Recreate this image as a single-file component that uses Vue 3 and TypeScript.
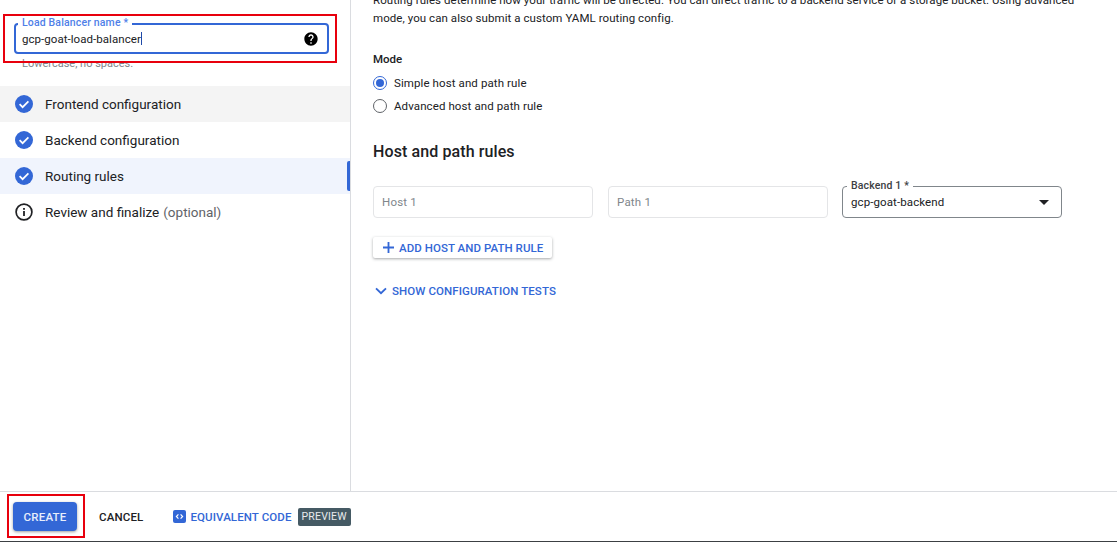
<script setup lang="ts">
const steps = [
  { label: 'Frontend configuration', done: true, cls: 'hovered' },
  { label: 'Backend configuration', done: true, cls: '' },
  { label: 'Routing rules', done: true, cls: 'active' },
  { label: 'Review and finalize', note: '(optional)', done: false, cls: '' },
]
</script>

<template>
  <div class="page">
    <div class="main">
      <aside class="side">
        <div class="name-field">
          <span class="float-label blue">Load Balancer name *</span>
          <span class="value">gcp-goat-load-balancer<i class="caret"></i></span>
          <svg class="help" viewBox="0 0 24 24" width="16" height="16">
            <path d="M12 2C6.48 2 2 6.48 2 12s4.48 10 10 10 10-4.48 10-10S17.52 2 12 2zm1 17h-2v-2h2v2zm2.07-7.75-.9.92C13.45 12.9 13 13.5 13 15h-2v-.5c0-1.1.45-2.1 1.17-2.83l1.24-1.26c.37-.36.59-.86.59-1.41 0-1.1-.9-2-2-2s-2 .9-2 2H8c0-2.21 1.79-4 4-4s4 1.79 4 4c0 .88-.36 1.68-.93 2.25z" />
          </svg>
          <div class="red-box name-box"></div>
        </div>
        <div class="hint">Lowercase, no spaces.</div>
        <ul class="steps">
          <li v-for="s in steps" :key="s.label" class="step" :class="s.cls">
            <svg v-if="s.done" viewBox="0 0 18 18" width="18" height="18" class="step-icon">
              <circle cx="9" cy="9" r="9" fill="#3367d6" />
              <path d="M4.6 9.2l3 3 5.8-5.8" fill="none" stroke="#fff" stroke-width="1.7" />
            </svg>
            <svg v-else viewBox="0 0 18 18" width="18" height="18" class="step-icon">
              <circle cx="9" cy="9" r="7.9" fill="none" stroke="#202124" stroke-width="1.7" />
              <rect x="8.1" y="8" width="1.8" height="5" fill="#202124" />
              <rect x="8.1" y="5" width="1.8" height="1.8" fill="#202124" />
            </svg>
            <span>{{ s.label }}</span>
            <span v-if="s.note" class="note">{{ s.note }}</span>
          </li>
        </ul>
      </aside>

      <section class="content">
        <p class="intro">
          Routing rules determine how your traffic will be directed. You can direct traffic to a backend service or a storage bucket. Using advanced<br />
          mode, you can also submit a custom YAML routing config.
        </p>
        <div class="mode-title">Mode</div>
        <div class="radio-row">
          <span class="radio on"><i></i></span>
          <span>Simple host and path rule</span>
        </div>
        <div class="radio-row second">
          <span class="radio"></span>
          <span>Advanced host and path rule</span>
        </div>
        <h2>Host and path rules</h2>
        <div class="rule-row">
          <div class="ghost-input">Host 1</div>
          <div class="ghost-input">Path 1</div>
          <div class="select">
            <span class="float-label dark">Backend 1 *</span>
            <span>gcp-goat-backend</span>
            <i class="arrow"></i>
          </div>
        </div>
        <button class="add-btn">
          <svg viewBox="0 0 12 12" width="11" height="11"><path d="M5 0h2v5h5v2H7v5H5V7H0V5h5z" fill="#3367d6" /></svg>
          ADD HOST AND PATH RULE
        </button>
        <div class="show-tests">
          <svg viewBox="0 0 14 9" width="12" height="8"><path d="M1.2 1.5L7 7l5.8-5.5" fill="none" stroke="#3367d6" stroke-width="2.2" /></svg>
          SHOW CONFIGURATION TESTS
        </div>
      </section>
    </div>

    <footer class="footer">
      <div class="create-wrap">
        <button class="create">CREATE</button>
        <div class="red-box create-box"></div>
      </div>
      <button class="cancel">CANCEL</button>
      <div class="code-link">
        <svg viewBox="0 0 13 13" width="13" height="13">
          <rect width="13" height="13" rx="2" fill="#3367d6" />
          <path d="M5.4 4.4L3.4 6.5l2 2.1M7.6 4.4l2 2.1-2 2.1" fill="none" stroke="#fff" stroke-width="1.2" />
        </svg>
        EQUIVALENT CODE
      </div>
      <span class="preview">PREVIEW</span>
    </footer>
  </div>
</template>

<style>
html, body {
  margin: 0;
  background: #fff;
  overflow: hidden;
}
</style>

<style scoped>
.page {
  width: 1117px;
  height: 542px;
  display: flex;
  flex-direction: column;
  font-family: Roboto, "Liberation Sans", sans-serif;
  color: #202124;
  font-size: 13px;
  box-sizing: border-box;
  border-bottom: 1px solid #3c4043;
  overflow: hidden;
}

.main {
  flex: 1;
  display: flex;
  min-height: 0;
}

.side {
  width: 351px;
  flex: none;
  box-sizing: border-box;
  border-right: 1px solid #dadce0;
  padding-top: 23px;
}

.name-field {
  position: relative;
  margin-left: 14px;
  width: 315px;
  height: 31px;
  box-sizing: border-box;
  border: 2px solid #3367d6;
  border-radius: 4px;
  display: flex;
  align-items: center;
  padding: 0 8px 0 6px;
  justify-content: space-between;
}

.value {
  display: flex;
  align-items: center;
  font-size: 11.5px;
  letter-spacing: 0.05px;
}

.caret {
  width: 1px;
  height: 13px;
  background: #1f4aa8;
}

.help {
  fill: #000;
}

.float-label {
  position: absolute;
  top: -9px;
  left: 2px;
  padding: 0 4px;
  background: #fff;
  font-size: 10.5px;
  font-weight: 500;
  line-height: 14px;
  letter-spacing: 0.15px;
}

.blue {
  color: #4f7fe8;
}

.dark {
  color: #3c4043;
  top: -8px;
  left: 4px;
}

.red-box {
  position: absolute;
  border: 2px solid #e8000d;
  box-sizing: border-box;
  pointer-events: none;
}

.name-box {
  left: -13px;
  top: -11px;
  width: 334px;
  height: 49px;
}

.hint {
  margin: 3px 0 0 22px;
  font-size: 11px;
  line-height: 14px;
  color: #80868b;
}

.steps {
  list-style: none;
  margin: 15px 0 0;
  padding: 0;
}

.step {
  height: 36px;
  display: flex;
  align-items: center;
  padding-left: 15px;
  font-size: 13.5px;
  position: relative;
}

.step-icon {
  margin-right: 12px;
  flex: none;
}

.hovered {
  background: #f4f4f4;
}

.active {
  background: #f0f4fd;
}

.active::after {
  content: "";
  position: absolute;
  right: 0;
  top: 3px;
  bottom: 3px;
  width: 3px;
  border-radius: 2px 0 0 2px;
  background: #3367d6;
}

.note {
  color: #5f6368;
  margin-left: 4px;
}

.content {
  flex: 1;
  padding-left: 22px;
  min-width: 0;
}

.intro {
  margin: -9px 0 0;
  font-size: 11.5px;
  line-height: 18px;
  white-space: nowrap;
  letter-spacing: 0.065px;
}

.mode-title {
  margin-top: 23px;
  font-size: 11.5px;
  font-weight: 500;
  line-height: 18px;
}

.radio-row {
  display: flex;
  align-items: center;
  gap: 7px;
  margin-top: 6px;
  height: 18px;
  font-size: 11.5px;
  letter-spacing: 0.1px;
}

.second {
  margin-top: 5px;
}

.radio {
  width: 14px;
  height: 14px;
  box-sizing: border-box;
  border: 1px solid #5f6368;
  border-radius: 50%;
  display: flex;
  align-items: center;
  justify-content: center;
  flex: none;
}

.radio.on {
  border-color: #3367d6;
}

.radio.on i {
  width: 8px;
  height: 8px;
  border-radius: 50%;
  background: #3367d6;
}

h2 {
  margin: 25px 0 0;
  font-size: 16px;
  font-weight: 500;
  line-height: 24px;
  letter-spacing: 0.1px;
}

.rule-row {
  display: flex;
  gap: 15px;
  margin-top: 22px;
}

.ghost-input {
  width: 220px;
  height: 32px;
  box-sizing: border-box;
  border: 1px solid #e4e5e7;
  border-radius: 4px;
  display: flex;
  align-items: center;
  padding-left: 8px;
  color: #80868b;
  font-size: 11.5px;
  letter-spacing: 0.2px;
}

.select {
  position: relative;
  width: 220px;
  height: 32px;
  box-sizing: border-box;
  margin-left: -1px;
  border: 1px solid #80868b;
  border-radius: 4px;
  display: flex;
  align-items: center;
  padding-left: 8px;
  font-size: 11.5px;
  letter-spacing: 0.1px;
}

.arrow {
  position: absolute;
  right: 12px;
  top: 13px;
  border-left: 5px solid transparent;
  border-right: 5px solid transparent;
  border-top: 5px solid #202124;
}

.add-btn {
  display: flex;
  align-items: center;
  gap: 5px;
  margin-top: 19px;
  height: 21px;
  padding: 0 0 0 10px;
  width: 179px;
  border: 0;
  border-radius: 2px;
  background: #fff;
  box-shadow: 0 1px 3px rgba(60, 64, 67, 0.45);
  color: #3367d6;
  font: 500 11.5px Roboto, sans-serif;
  letter-spacing: 0.05px;
}

.show-tests {
  display: flex;
  align-items: center;
  gap: 5px;
  margin: 26px 0 0 2px;
  font-size: 11.5px;
  font-weight: 500;
  line-height: 14px;
  color: #3367d6;
  letter-spacing: 0.08px;
}

.footer {
  height: 50px;
  flex: none;
  box-sizing: border-box;
  border-top: 1px solid #dadce0;
  display: flex;
  align-items: center;
  padding-left: 13px;
}

.create-wrap {
  position: relative;
  display: flex;
}

.create {
  width: 64px;
  height: 29px;
  border: 0;
  border-radius: 4px;
  background: #3367d6;
  color: #e8eefb;
  font: 500 11.5px Roboto, sans-serif;
  letter-spacing: 0.2px;
  box-shadow: 0 1px 3px rgba(60, 64, 67, 0.5);
}

.create-box {
  left: -6px;
  top: -8px;
  width: 78px;
  height: 44px;
}

.cancel {
  margin-left: 22px;
  padding: 0;
  border: 0;
  background: none;
  color: #202124;
  font: 500 11.5px Roboto, sans-serif;
  letter-spacing: 0.15px;
}

.code-link {
  display: flex;
  align-items: center;
  gap: 4px;
  margin-left: 30px;
  color: #3367d6;
  font-size: 11.5px;
  font-weight: 500;
  letter-spacing: 0.1px;
}

.preview {
  margin-left: 6px;
  height: 18px;
  padding: 0 4px;
  display: flex;
  align-items: center;
  background: #455a64;
  border-radius: 2px;
  color: #e8eaed;
  font-size: 10.5px;
  letter-spacing: 0.2px;
}
</style>
